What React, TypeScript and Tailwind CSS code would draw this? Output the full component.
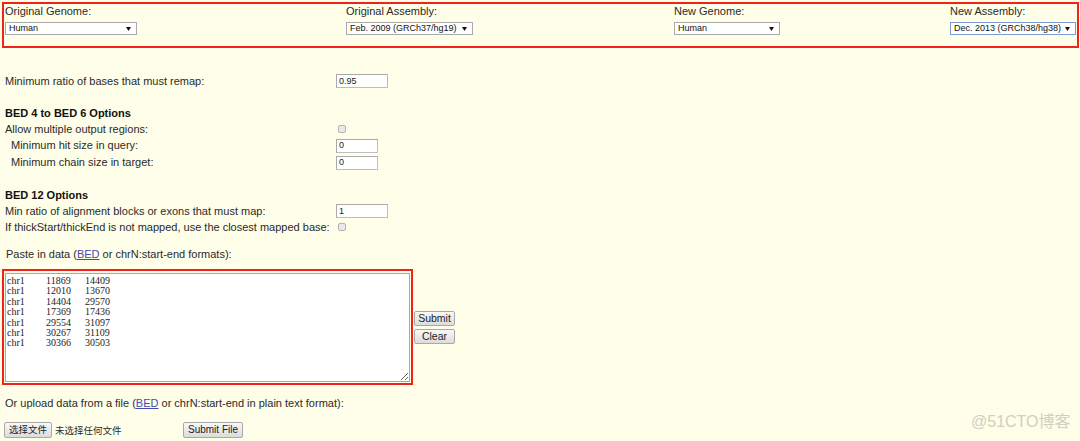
import clsx from 'clsx';

const sans = "font-['Liberation_Sans','Noto_Sans_CJK_SC',sans-serif]";

const bedRows = [
  ['chr1', '11869', '14409'],
  ['chr1', '12010', '13670'],
  ['chr1', '14404', '29570'],
  ['chr1', '17369', '17436'],
  ['chr1', '29554', '31097'],
  ['chr1', '30267', '31109'],
  ['chr1', '30366', '30503'],
];

function Caret() {
  return (
    <svg width="5" height="4" viewBox="0 0 5 4" aria-hidden>
      <path d="M0 0h5L2.5 4z" fill="#111" />
    </svg>
  );
}

function FakeSelect({ value, className, focused = false }: { value: string; className?: string; focused?: boolean }) {
  return (
    <div
      className={clsx(
        'flex h-[13px] items-center justify-between border bg-white pr-[5px] pl-[3px] text-[9px] leading-none text-[#111]',
        focused ? 'border-[#7b9bd6]' : 'border-[#a9a9a9]',
        className
      )}
    >
      <span>{value}</span>
      <Caret />
    </div>
  );
}

function TextBox({ value, className }: { value: string; className?: string }) {
  return (
    <div
      className={clsx(
        'flex h-[14px] items-center border border-[#bdbdbd] border-t-[#a9a9a9] border-l-[#a9a9a9] bg-white pl-[2px] text-[9px] leading-none text-[#222]',
        className
      )}
    >
      {value}
    </div>
  );
}

function Check() {
  return <div className="ml-[2px] h-[8px] w-[8px] rounded-[2px] border border-[#b3b3b3] bg-[#e9e9e9]" />;
}

function GrayButton({ children, className }: { children: React.ReactNode; className?: string }) {
  return (
    <div
      className={clsx(
        'flex items-center justify-center rounded-[2px] border border-[#a8a8a8] bg-gradient-to-b from-[#f8f8f8] to-[#dcdcdc] leading-none whitespace-nowrap text-[#222]',
        className
      )}
    >
      {children}
    </div>
  );
}

function OptionRow({ label, indent = false, h, children }: { label: string; indent?: boolean; h: string; children?: React.ReactNode }) {
  return (
    <div className={clsx('grid grid-cols-[331px_1fr] items-center', h)}>
      <span className={clsx('whitespace-nowrap', indent && 'pl-[6px]')}>{label}</span>
      <div className="flex items-center">{children}</div>
    </div>
  );
}

function Heading({ children, className }: { children: React.ReactNode; className?: string }) {
  return <div className={clsx('flex h-[16px] items-center font-bold text-[#111]', className)}>{children}</div>;
}

export default function App() {
  return (
    <div className={clsx('relative h-[441px] w-[1080px] overflow-hidden bg-[#FFFEE8] text-[11px] leading-[13px] text-[#2a2a2a]', sans)}>
      {/* genome / assembly picker */}
      <div className="mt-[2px] ml-[2px] h-[46px] w-[1077px] border-2 border-[#f1221a] pt-[1px] pl-[1px]">
        <div className="grid grid-cols-[341px_328px_276px_1fr]">
          <div>
            <div className="h-[13px]">Original Genome:</div>
            <FakeSelect value="Human" className="mt-[4px] w-[132px]" />
          </div>
          <div>
            <div className="h-[13px]">Original Assembly:</div>
            <FakeSelect value="Feb. 2009 (GRCh37/hg19)" className="mt-[4px] w-[127px]" />
          </div>
          <div>
            <div className="h-[13px]">New Genome:</div>
            <FakeSelect value="Human" className="mt-[4px] w-[106px]" />
          </div>
          <div>
            <div className="h-[13px]">New Assembly:</div>
            <FakeSelect value="Dec. 2013 (GRCh38/hg38)" focused className="mt-[4px] w-[126px]" />
          </div>
        </div>
      </div>

      {/* options */}
      <div className="mt-[24px] pl-[5px]">
        <OptionRow label="Minimum ratio of bases that must remap:" h="h-[18px]">
          <TextBox value="0.95" className="w-[52px]" />
        </OptionRow>

        <Heading className="mt-[15px]">BED 4 to BED 6 Options</Heading>
        <OptionRow label="Allow multiple output regions:" h="h-[16px]">
          <Check />
        </OptionRow>
        <OptionRow label="Minimum hit size in query:" indent h="h-[17px]">
          <TextBox value="0" className="w-[42px]" />
        </OptionRow>
        <OptionRow label="Minimum chain size in target:" indent h="h-[17px]">
          <TextBox value="0" className="w-[42px]" />
        </OptionRow>

        <Heading className="mt-[16px]">BED 12 Options</Heading>
        <OptionRow label="Min ratio of alignment blocks or exons that must map:" h="h-[16px]">
          <TextBox value="1" className="w-[52px]" />
        </OptionRow>
        <OptionRow label="If thickStart/thickEnd is not mapped, use the closest mapped base:" h="h-[16px]">
          <Check />
        </OptionRow>
      </div>

      {/* paste */}
      <div className="mt-[11px] flex h-[17px] items-center pl-[6px]">
        Paste in data (<span className="text-[#4747b0] underline">BED</span>&nbsp;or chrN:start-end formats):
      </div>
      <div className="mt-[6px] ml-[2px] flex items-center">
        <div className="h-[116px] w-[411px] border-2 border-[#f1221a] pt-[2px] pl-[1px]">
          <textarea
            readOnly
            value={bedRows.map((r) => r.join('\t')).join('\n')}
            className="h-[109px] w-[405px] border border-[#a9a9a9] bg-white px-[1px] pt-[2px] font-['Liberation_Serif',serif] text-[10px] leading-[10.4px] text-[#222] [tab-size:39px] outline-none"
          />
        </div>
        <div className="ml-[1px] flex flex-col gap-[3px]">
          <GrayButton className="h-[15px] w-[41px] text-[10.5px]">Submit</GrayButton>
          <GrayButton className="h-[15px] w-[41px] text-[10.5px]">Clear</GrayButton>
        </div>
      </div>

      {/* upload */}
      <div className="mt-[10px] flex h-[16px] items-center pl-[5px]">
        Or upload data from a file (<span className="text-[#4747b0] underline">BED</span>&nbsp;or chrN:start-end in plain text format):
      </div>
      <div className="mt-[11px] flex h-[16px] items-center pl-[4px]">
        <GrayButton className="h-[16px] w-[48px] text-[9.5px]">选择文件</GrayButton>
        <span className="ml-[3px] w-[66px] text-[9.5px] whitespace-nowrap">未选择任何文件</span>
        <GrayButton className="ml-[62px] h-[16px] w-[60px] text-[10px]">Submit File</GrayButton>
      </div>

      <div className="absolute top-[412px] left-[971px] text-[16px] leading-[20px] text-[#cfcfc2]">@51CTO博客</div>
    </div>
  );
}
